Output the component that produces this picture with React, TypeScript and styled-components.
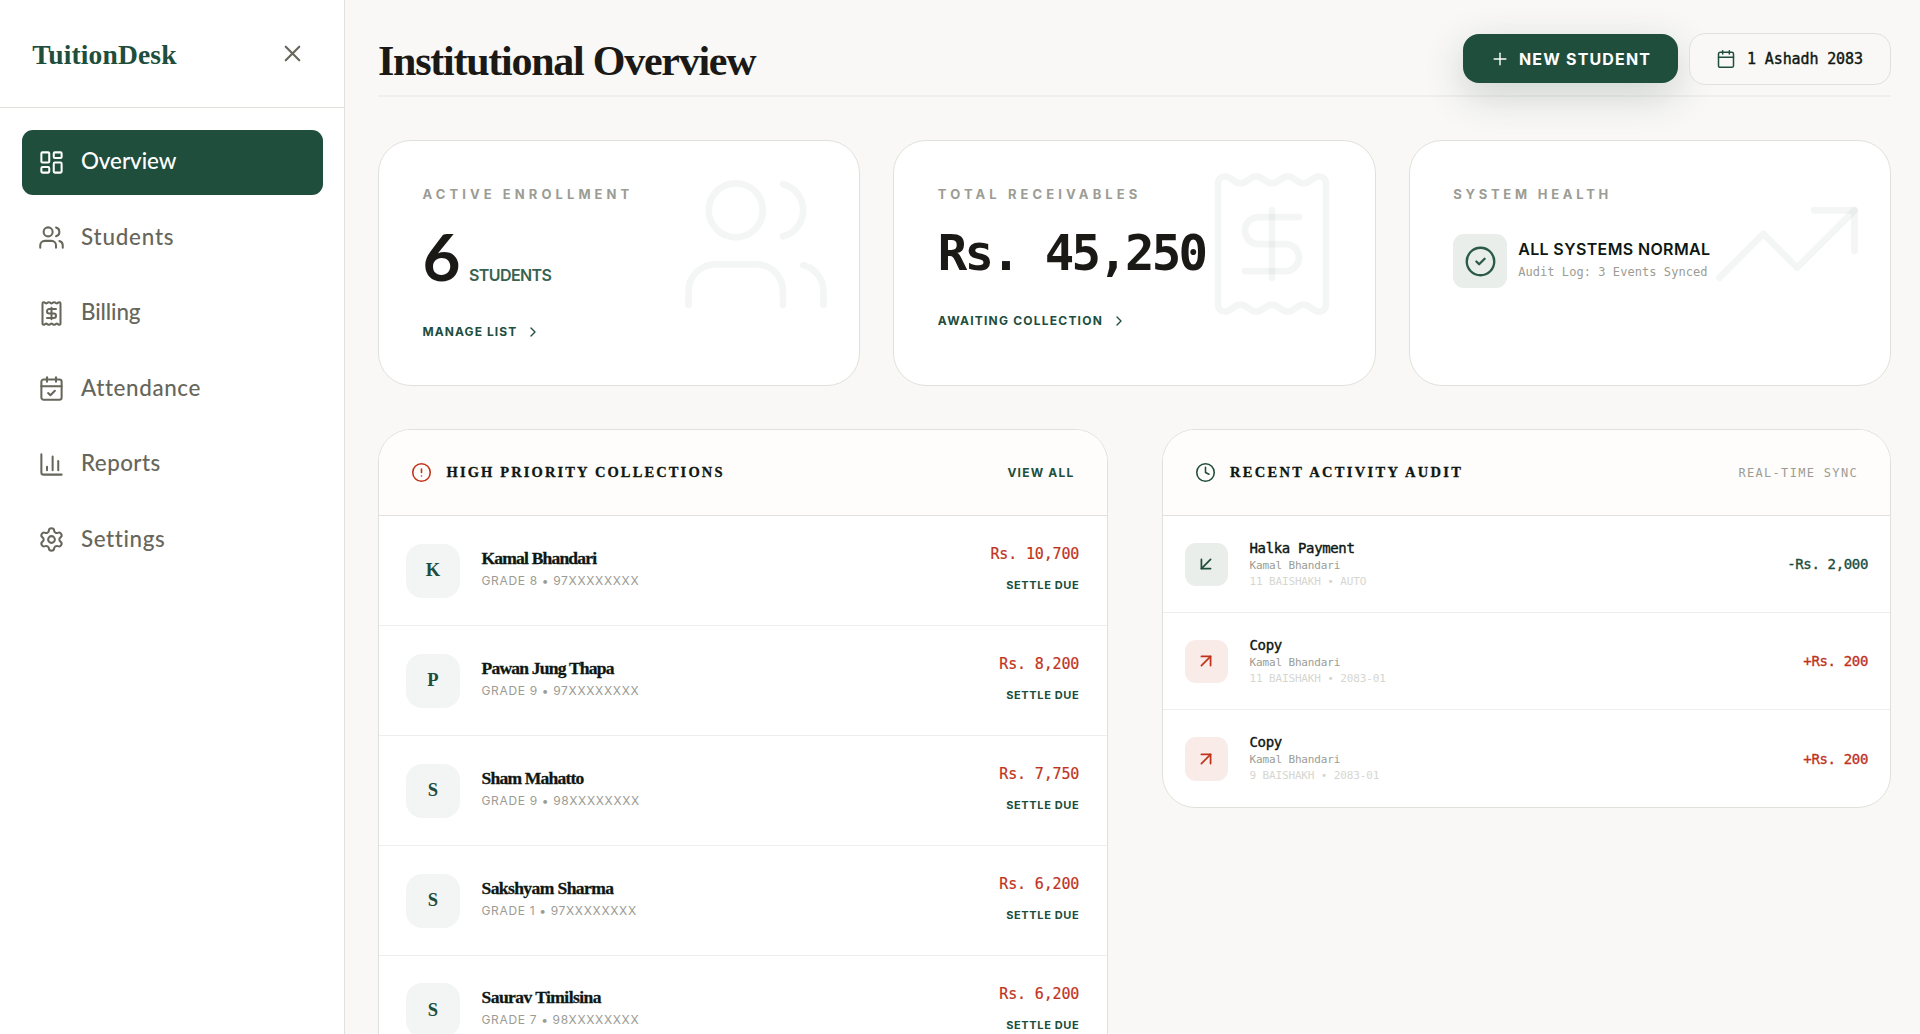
import React from 'react';
import styled, { createGlobalStyle, css } from 'styled-components';
import {
  X, LayoutDashboard, Users, CalendarCheck, ChartColumn, Settings, Plus, Calendar,
  ChevronRight, CircleCheck, TrendingUp, CircleAlert, Clock, ArrowDownLeft, ArrowUpRight,
} from 'lucide-react';

const c = {
  green: '#204e3d',
  red: '#c0341d',
  ink: '#1a1916',
  dark: '#0e1712',
  nav: '#66665b',
  muted: '#9b9c94',
  faint: '#d6d6d1',
  border: '#e1e1dc',
  rowLine: '#eeeeeb',
  page: '#f9f8f6',
  head: '#fefdfb',
  tint: '#f3f5f4',
};

const sans = css`font-family: Inter, "Liberation Sans", sans-serif;`;
const round = css`font-family: Lato, "Liberation Sans", sans-serif;`;
const serif = css`font-family: "Liberation Serif", serif;`;
const mono = css`font-family: "DejaVu Sans Mono", "Liberation Mono", monospace;`;

const Global = createGlobalStyle`
  * { box-sizing: border-box; }
  body { margin: 0; background: ${c.page}; overflow: hidden; }
  svg { display: block; flex: none; }
`;

const Shell = styled.div`
  display: flex;
  height: 100vh;
  overflow: hidden;
  white-space: nowrap;
  ${sans}
`;

/* Sidebar */
const Sidebar = styled.aside`
  width: 345px;
  flex: none;
  background: #fff;
  border-right: 1px solid ${c.border};
`;
const Brand = styled.div`
  height: 108px;
  padding: 0 38px 0 32.3px;
  display: flex;
  align-items: center;
  justify-content: space-between;
  border-bottom: 1px solid ${c.border};
  color: ${c.nav};
`;
const Logo = styled.span`
  padding-top: 2px;
  ${serif}
  font-size: 27.5px;
  font-weight: 700;
  letter-spacing: 0.15px;
  color: ${c.green};
`;
const Nav = styled.nav`
  display: flex;
  flex-direction: column;
  gap: 11px;
  padding: 22px 21.5px;
`;
const NavItem = styled.a<{ $active?: boolean }>`
  display: flex;
  align-items: center;
  gap: 16.5px;
  height: 64.5px;
  padding-left: 16px;
  border-radius: 11px;
  color: ${p => (p.$active ? '#fff' : c.nav)};
  background: ${p => (p.$active ? c.green : 'transparent')};
`;
const NavLabel = styled.span<{ $track: number }>`
  padding-bottom: 3px;
  ${round}
  font-size: 22.4px;
  font-weight: 500;
  letter-spacing: ${p => p.$track}px;
`;

/* Page */
const Main = styled.main`
  flex: 1;
  min-width: 0;
  padding: 33px 29px 0 33px;
`;
const Header = styled.header`
  display: flex;
  justify-content: space-between;
  height: 64px;
  border-bottom: 2px solid #efefec;
`;
const Title = styled.h1`
  margin: 0;
  padding-top: 6px;
  line-height: 44px;
  ${serif}
  font-size: 42px;
  font-weight: 700;
  letter-spacing: -1.25px;
  color: ${c.ink};
`;
const Actions = styled.div`
  display: flex;
  align-items: center;
  gap: 11.5px;
  height: 51.5px;
`;
const Primary = styled.button`
  display: flex;
  align-items: center;
  gap: 9.5px;
  height: 49px;
  width: 215px;
  padding: 0 0 0 27px;
  border: 0;
  border-radius: 16px;
  background: ${c.green};
  color: #fff;
  box-shadow: 0 12px 40px rgba(28, 62, 50, 0.2);
  ${sans}
  font-size: 16px;
  font-weight: 700;
  letter-spacing: 1.17px;
`;
const DateBox = styled.div`
  display: flex;
  align-items: center;
  gap: 11px;
  height: 51.5px;
  width: 202px;
  padding-left: 26px;
  border: 1px solid ${c.border};
  border-radius: 16px;
  background: ${c.page};
  color: ${c.green};
`;
const DateText = styled.span`
  ${mono}
  font-size: 15px;
  letter-spacing: -0.12px;
  color: ${c.dark};
  -webkit-text-stroke: 0.4px ${c.dark};
`;

/* Stat cards */
const Stats = styled.section`
  display: grid;
  grid-template-columns: repeat(3, 1fr);
  gap: 33px;
  margin-top: 43px;
`;
const Card = styled.article`
  position: relative;
  height: 245.6px;
  padding: 43px 43.5px;
  border: 1px solid ${c.border};
  border-radius: 33px;
  background: #fff;
`;
const Watermark = styled.div`
  position: absolute;
  top: 22px;
  right: 22px;
  color: rgba(32, 78, 61, 0.05);
`;
const Label = styled.div<{ $track: number }>`
  line-height: 20px;
  font-size: 13px;
  font-weight: 700;
  letter-spacing: ${p => p.$track}px;
  color: ${c.muted};
`;
const Count = styled.div`
  display: flex;
  align-items: baseline;
  gap: 8.5px;
  height: 60px;
  margin-top: 24px;
  line-height: 56px;
  ${round}
  font-size: 65.5px;
  font-weight: 700;
  color: ${c.ink};
`;
const Unit = styled.span`
  ${sans}
  font-size: 16px;
  font-weight: 600;
  letter-spacing: -0.6px;
  color: #36624f;
`;
const Money = styled.div`
  height: 49px;
  margin-top: 24px;
  line-height: 51px;
  ${mono}
  font-size: 49px;
  font-weight: 700;
  letter-spacing: -2.75px;
  color: ${c.ink};
`;
const CardLink = styled.a<{ $track: number }>`
  display: flex;
  align-items: center;
  gap: 8px;
  margin-top: 35px;
  line-height: 18px;
  font-size: 12px;
  font-weight: 700;
  letter-spacing: ${p => p.$track}px;
  color: ${c.green};
`;
const Health = styled.div`
  display: flex;
  gap: 11px;
  margin-top: 30px;
`;
const HealthIcon = styled.div`
  display: grid;
  place-items: center;
  width: 54px;
  height: 54px;
  border-radius: 11px;
  background: #e9eeeb;
  color: #2b5a47;
`;
const HealthTitle = styled.div`
  padding-top: 4px;
  line-height: 22px;
  font-size: 16px;
  font-weight: 600;
  letter-spacing: 0.36px;
  color: ${c.dark};
`;
const HealthNote = styled.div`
  padding-top: 3px;
  line-height: 19px;
  ${mono}
  font-size: 12px;
  letter-spacing: 0.06px;
  color: ${c.muted};
`;

/* Panels */
const Panels = styled.section`
  display: grid;
  grid-template-columns: 1fr 1fr;
  align-items: start;
  gap: 54px;
  margin-top: 43.4px;
`;
const Panel = styled.article`
  overflow: hidden;
  border: 1px solid ${c.border};
  border-radius: 33px;
  background: #fff;
`;
const PanelHead = styled.div`
  display: flex;
  align-items: center;
  height: 86.5px;
  padding: 0 32px;
  border-bottom: 1px solid ${c.border};
  background: ${c.head};
`;
const PanelTitle = styled.h2<{ $track: number }>`
  flex: 1;
  margin: 0 0 0 14.5px;
  ${serif}
  font-size: 14.5px;
  font-weight: 700;
  letter-spacing: ${p => p.$track}px;
  color: ${c.dark};
  -webkit-text-stroke: 0.3px ${c.dark};
`;
const ViewAll = styled.a`
  font-size: 12px;
  font-weight: 700;
  letter-spacing: 1.2px;
  color: ${c.green};
`;
const Sync = styled.span`
  ${mono}
  font-size: 12px;
  letter-spacing: 1.32px;
  color: ${c.muted};
`;
const DueRow = styled.div`
  display: flex;
  align-items: center;
  height: 109.9px;
  padding: 0 27.3px 0 27px;
  border-bottom: 1px solid ${c.rowLine};
`;
const Avatar = styled.div`
  display: grid;
  place-items: center;
  width: 54px;
  height: 54px;
  border-radius: 16px;
  background: ${c.tint};
  ${serif}
  font-size: 18.5px;
  font-weight: 700;
  color: ${c.green};
`;
const Person = styled.div`
  flex: 1;
  padding: 0 0 5px 21.5px;
`;
const Name = styled.div<{ $track: number }>`
  line-height: 24px;
  ${serif}
  font-size: 17.5px;
  font-weight: 700;
  letter-spacing: ${p => p.$track}px;
  color: ${c.dark};
  -webkit-text-stroke: 0.3px ${c.dark};
`;
const Grade = styled.div`
  line-height: 21px;
  font-size: 12px;
  letter-spacing: 0.66px;
  color: ${c.muted};
`;
const Due = styled.div`
  padding-bottom: 4px;
  text-align: right;
`;
const DueAmount = styled.div`
  line-height: 24px;
  ${mono}
  font-size: 15px;
  letter-spacing: -0.15px;
  color: ${c.red};
  -webkit-text-stroke: 0.2px ${c.red};
`;
const Settle = styled.div`
  padding-top: 9px;
  line-height: 20px;
  font-size: 11px;
  font-weight: 700;
  letter-spacing: 0.62px;
  color: ${c.green};
`;
const LogRow = styled.div`
  display: flex;
  align-items: center;
  height: 97px;
  padding: 0 22px;
  border-bottom: 1px solid ${c.rowLine};
  &:last-child { border-bottom: 0; }
`;
const LogIcon = styled.div<{ $credit: boolean }>`
  display: grid;
  place-items: center;
  width: 43.5px;
  height: 43.5px;
  border-radius: 11px;
  background: ${p => (p.$credit ? '#e9eeeb' : '#f8ebe8')};
  color: ${p => (p.$credit ? c.green : c.red)};
`;
const LogText = styled.div`
  flex: 1;
  padding-left: 21.5px;
  ${mono}
`;
const LogTitle = styled.div`
  line-height: 19px;
  font-size: 14px;
  letter-spacing: -0.35px;
  color: ${c.dark};
  -webkit-text-stroke: 0.4px ${c.dark};
`;
const LogLine = styled.div<{ $faint?: boolean }>`
  line-height: 16.2px;
  font-size: 11px;
  letter-spacing: -0.14px;
  color: ${p => (p.$faint ? c.faint : c.muted)};
`;
const LogAmount = styled.div<{ $credit: boolean }>`
  ${mono}
  font-size: 14px;
  letter-spacing: -0.35px;
  color: ${p => (p.$credit ? c.green : c.red)};
  -webkit-text-stroke: 0.35px ${p => (p.$credit ? c.green : c.red)};
`;

function ReceiptIcon({ size = 24, strokeWidth = 2 }: { size?: number; strokeWidth?: number }) {
  return (
    <svg width={size} height={size} viewBox="0 0 24 24" fill="none" stroke="currentColor"
      strokeWidth={strokeWidth} strokeLinecap="round" strokeLinejoin="round">
      <path d="M4 3a1 1 0 0 1 1-1 1.3 1.3 0 0 1 .7.2l.933.6a1.3 1.3 0 0 0 1.4 0l.934-.6a1.3 1.3 0 0 1 1.4 0l.933.6a1.3 1.3 0 0 0 1.4 0l.933-.6a1.3 1.3 0 0 1 1.4 0l.934.6a1.3 1.3 0 0 0 1.4 0l.933-.6A1.3 1.3 0 0 1 19 2a1 1 0 0 1 1 1v18a1 1 0 0 1-1 1 1.3 1.3 0 0 1-.7-.2l-.933-.6a1.3 1.3 0 0 0-1.4 0l-.934.6a1.3 1.3 0 0 1-1.4 0l-.933-.6a1.3 1.3 0 0 0-1.4 0l-.933.6a1.3 1.3 0 0 1-1.4 0l-.934-.6a1.3 1.3 0 0 0-1.4 0l-.933.6a1.3 1.3 0 0 1-.7.2 1 1 0 0 1-1-1z" />
      <path d="M16 8h-6a2 2 0 0 0 0 4h4a2 2 0 0 1 0 4H8" />
      <path d="M12 17V7" />
    </svg>
  );
}

const nav = [
  { label: 'Overview', icon: LayoutDashboard, track: -0.05, active: true },
  { label: 'Students', icon: Users, track: 0.8 },
  { label: 'Billing', icon: ReceiptIcon, track: -0.1 },
  { label: 'Attendance', icon: CalendarCheck, track: 0.62 },
  { label: 'Reports', icon: ChartColumn, track: 0.45 },
  { label: 'Settings', icon: Settings, track: 0.6 },
];
const dues = [
  { name: 'Kamal Bhandari', grade: 'GRADE 8 • 97XXXXXXXX', amount: 'Rs. 10,700', track: -0.8 },
  { name: 'Pawan Jung Thapa', grade: 'GRADE 9 • 97XXXXXXXX', amount: 'Rs. 8,200', track: -0.78 },
  { name: 'Sham Mahatto', grade: 'GRADE 9 • 98XXXXXXXX', amount: 'Rs. 7,750', track: -0.77 },
  { name: 'Sakshyam Sharma', grade: 'GRADE 1 • 97XXXXXXXX', amount: 'Rs. 6,200', track: -0.58 },
  { name: 'Saurav Timilsina', grade: 'GRADE 7 • 98XXXXXXXX', amount: 'Rs. 6,200', track: -0.55 },
];
const logs = [
  { title: 'Halka Payment', who: 'Kamal Bhandari', when: '11 BAISHAKH • AUTO', amount: '-Rs. 2,000', credit: true },
  { title: 'Copy', who: 'Kamal Bhandari', when: '11 BAISHAKH • 2083-01', amount: '+Rs. 200', credit: false },
  { title: 'Copy', who: 'Kamal Bhandari', when: '9 BAISHAKH • 2083-01', amount: '+Rs. 200', credit: false },
];

export default function App() {
  return (
    <Shell>
      <Global />
      <Sidebar>
        <Brand>
          <Logo>TuitionDesk</Logo>
          <X size={27} strokeWidth={1.9} />
        </Brand>
        <Nav>
          {nav.map(({ label, icon: Icon, track, active }) => (
            <NavItem key={label} $active={active}>
              <Icon size={27} strokeWidth={1.8} />
              <NavLabel $track={track}>{label}</NavLabel>
            </NavItem>
          ))}
        </Nav>
      </Sidebar>
      <Main>
        <Header>
          <Title>Institutional Overview</Title>
          <Actions>
            <Primary><Plus size={20} strokeWidth={1.7} />NEW STUDENT</Primary>
            <DateBox><Calendar size={20} strokeWidth={1.8} /><DateText>1 Ashadh 2083</DateText></DateBox>
          </Actions>
        </Header>
        <Stats>
          <Card>
            <Watermark><Users size={162} strokeWidth={1} /></Watermark>
            <Label $track={4.08}>ACTIVE ENROLLMENT</Label>
            <Count>6<Unit>STUDENTS</Unit></Count>
            <CardLink $track={1.08}>MANAGE LIST<ChevronRight size={16} strokeWidth={2} /></CardLink>
          </Card>
          <Card>
            <Watermark><ReceiptIcon size={162} strokeWidth={1} /></Watermark>
            <Label $track={4.1}>TOTAL RECEIVABLES</Label>
            <Money>Rs. 45,250</Money>
            <CardLink $track={1.22}>AWAITING COLLECTION<ChevronRight size={16} strokeWidth={2} /></CardLink>
          </Card>
          <Card>
            <Watermark><TrendingUp size={162} strokeWidth={1} /></Watermark>
            <Label $track={3.75}>SYSTEM HEALTH</Label>
            <Health>
              <HealthIcon><CircleCheck size={33} strokeWidth={1.7} /></HealthIcon>
              <div>
                <HealthTitle>ALL SYSTEMS NORMAL</HealthTitle>
                <HealthNote>Audit Log: 3 Events Synced</HealthNote>
              </div>
            </Health>
          </Card>
        </Stats>
        <Panels>
          <Panel>
            <PanelHead>
              <CircleAlert size={21} strokeWidth={1.8} color={c.red} />
              <PanelTitle $track={2.12}>HIGH PRIORITY COLLECTIONS</PanelTitle>
              <ViewAll>VIEW ALL</ViewAll>
            </PanelHead>
            {dues.map(d => (
              <DueRow key={d.name}>
                <Avatar>{d.name[0]}</Avatar>
                <Person>
                  <Name $track={d.track}>{d.name}</Name>
                  <Grade>{d.grade}</Grade>
                </Person>
                <Due>
                  <DueAmount>{d.amount}</DueAmount>
                  <Settle>SETTLE DUE</Settle>
                </Due>
              </DueRow>
            ))}
          </Panel>
          <Panel>
            <PanelHead>
              <Clock size={21} strokeWidth={1.8} color={c.green} />
              <PanelTitle $track={2.32}>RECENT ACTIVITY AUDIT</PanelTitle>
              <Sync>REAL-TIME SYNC</Sync>
            </PanelHead>
            {logs.map((l, i) => (
              <LogRow key={i}>
                <LogIcon $credit={l.credit}>
                  {l.credit ? <ArrowDownLeft size={22} strokeWidth={1.9} /> : <ArrowUpRight size={22} strokeWidth={1.9} />}
                </LogIcon>
                <LogText>
                  <LogTitle>{l.title}</LogTitle>
                  <LogLine>{l.who}</LogLine>
                  <LogLine $faint>{l.when}</LogLine>
                </LogText>
                <LogAmount $credit={l.credit}>{l.amount}</LogAmount>
              </LogRow>
            ))}
          </Panel>
        </Panels>
      </Main>
    </Shell>
  );
}
